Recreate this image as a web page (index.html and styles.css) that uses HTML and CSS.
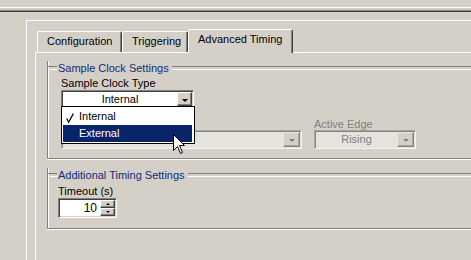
FILE: index.html
```html
<!DOCTYPE html>
<html>
<head>
<meta charset="utf-8">
<title>Advanced Timing</title>
<link rel="stylesheet" href="styles.css">
</head>
<body>
<div class="topbar"></div>
<div class="frame">
  <div class="frame-inner">
    <div class="outer">
      <div class="tabs">
        <div class="tab t1">Configuration</div>
        <div class="tab t2">Triggering</div>
        <div class="tab sel t3">Advanced Timing</div>
      </div>
      <div class="panel">
        <div class="group g1">
          <div class="ghead"><span class="gtitle">Sample Clock Settings</span></div>
          <div class="field">
            <div class="label">Sample Clock Type</div>
            <div class="combo-wrap">
              <div class="combo c-type"><span class="cval">Internal</span><span class="cbtn"><i class="arr"></i></span></div>
              <ul class="droplist">
                <li class="item"><svg class="check" width="8" height="10" viewBox="0 0 8 10"><path d="M0.8 5.6 L2.6 9.2 L7.4 0.6" fill="none" stroke="#000" stroke-width="1.2"/></svg>Internal</li>
                <li class="item hl">External</li>
              </ul>
              <svg class="cursor" width="13" height="21" viewBox="0 0 13 21"><path d="M0.5 0.5 L0.5 16.5 L4.5 12.5 L7.5 19.5 L9.5 18.5 L6.5 11.5 L11.5 11.5 Z" fill="#fff" stroke="#000" stroke-width="1" stroke-linejoin="miter"/></svg>
            </div>
          </div>
          <div class="row2">
            <div class="field f-src">
              <div class="label dis">&nbsp;</div>
              <div class="combo dis c-src"><span class="cval"></span><span class="cbtn"><i class="arr"></i></span></div>
            </div>
            <div class="field f-edge">
              <div class="label dis">Active Edge</div>
              <div class="combo dis c-edge"><span class="cval">Rising</span><span class="cbtn"><i class="arr"></i></span></div>
            </div>
          </div>
        </div>
        <div class="group g2">
          <div class="ghead"><span class="gtitle">Additional Timing Settings</span></div>
          <div class="label l-timeout">Timeout (s)</div>
          <div class="num">
            <span class="num-val">10</span>
            <span class="spin">
              <span class="sbtn"><i class="sarr up"></i></span>
              <span class="sbtn"><i class="sarr down"></i></span>
            </span>
          </div>
        </div>
      </div>
    </div>
  </div>
</div>
</body>
</html>
```

FILE: styles.css
```css
* { box-sizing: border-box; }
html, body {
  margin: 0;
  padding: 0;
}
body {
  width: 471px;
  height: 260px;
  overflow: hidden;
  background: #d4d0c8;
  font-family: "Liberation Sans", Arial, sans-serif;
  font-size: 11px;
  color: #000;
}
.topbar {
  height: 8px;
  border-bottom: 1px solid #fff;
}
.frame {
  margin-top: 2px;
  border-top: 1px solid #808080;
}
.frame-inner {
  border-top: 1px solid #404040;
  padding: 8px 0 0 26px;
}
.outer {
  border-top: 1px solid #fff;
  border-left: 1px solid #fff;
  height: 240px;
  padding: 8px 0 0 8px;
}
.tabs {
  display: flex;
  align-items: flex-end;
  height: 24px;
  margin-bottom: -1px;
  padding-left: 2px;
  position: relative;
  z-index: 1;
}
.tab {
  height: 21px;
  margin-bottom: 1px;
  border-top: 1px solid #fff;
  border-left: 1px solid #fff;
  border-right: 1px solid #404040;
  box-shadow: inset -1px 0 0 #808080;
  border-radius: 2px 2px 0 0;
  padding: 3px 0 0 9px;
  line-height: 13px;
  white-space: nowrap;
  background: #d4d0c8;
}
.t1 { width: 85px; }
.t2 { width: 66px; }
.t3 { width: 105px; }
.tab.sel {
  height: 24px;
  margin-bottom: 0;
}
.panel {
  border-top: 1px solid #fff;
  border-left: 1px solid #fff;
  padding-left: 11px;
  height: 208px;
}
.group {
  border-left: 1px solid #808080;
  border-bottom: 1px solid #808080;
  box-shadow: inset 1px 0 0 #fff, 0 1px 0 #fff;
}
.g1 {
  margin-top: 14px;
  padding: 0 0 9px 13px;
}
.g2 {
  margin-top: 15px;
  padding: 0 0 10px 10px;
}
.ghead {
  display: flex;
  align-items: center;
  height: 14px;
  margin-top: -6px;
}
.g1 .ghead { margin-left: -13px; }
.g2 .ghead { margin-left: -10px; }
.ghead::before,
.ghead::after {
  content: "";
  height: 2px;
  border-top: 1px solid #808080;
  border-bottom: 1px solid #fff;
}
.ghead::before { width: 9px; }
.ghead::after { flex: 1; }
.gtitle {
  color: #0f2d7c;
  line-height: 14px;
  padding: 0 3px 1px 1px;
  white-space: nowrap;
}
.label {
  line-height: 13px;
  white-space: nowrap;
}
.g1 > .field > .label { margin-top: 2px; }
.label.dis { color: #808080; line-height: 12px; }
.combo-wrap {
  position: relative;
  width: 133px;
}
.combo {
  display: flex;
  height: 18px;
  border: 1px solid;
  border-color: #808080 #fff #fff #808080;
  box-shadow: inset 1px 1px 0 #404040, inset -1px -1px 0 #d4d0c8;
  background: #fff;
  padding: 1px;
}
.cval {
  flex: 1;
  text-align: center;
  line-height: 14px;
  white-space: nowrap;
}
.cbtn {
  width: 15px;
  border: 1px solid;
  border-color: #fff #404040 #404040 #fff;
  box-shadow: inset -1px -1px 0 #808080;
  background: #d4d0c8;
  display: flex;
  align-items: center;
  justify-content: center;
}
.arr {
  width: 0;
  height: 0;
  border-left: 3px solid transparent;
  border-right: 3px solid transparent;
  border-top: 3px solid #000;
  margin-top: 2px;
}
.row2 {
  display: flex;
  gap: 12px;
  margin-top: 10px;
}
.combo.dis {
  height: 19px;
  background: #e5e3de;
  border-color: #a8a6a0 #f4f3f0 #f4f3f0 #a8a6a0;
  box-shadow: inset 1px 1px 0 #86837d, inset -1px -1px 0 #e5e3de;
}
.combo.dis .cval { color: #808080; line-height: 15px; }
.combo.dis .cbtn {
  width: 17px;
  border-color: #e9e7e2 #86837d #86837d #e9e7e2;
  box-shadow: inset -1px -1px 0 #a8a6a0;
  background: #d4d0c8;
}
.combo.dis .arr { border-top-color: #808080; }
.c-src { width: 241px; }
.c-edge { width: 102px; }
.droplist {
  position: absolute;
  left: 0;
  top: 16px;
  width: 134px;
  margin: 0;
  padding: 1px;
  list-style: none;
  background: #fff;
  border: 1px solid #000;
  z-index: 2;
}
.item {
  position: relative;
  height: 17px;
  line-height: 17px;
  padding-left: 16px;
  margin-right: 1px;
}
.item.hl {
  background: #0a246a;
  color: #fff;
}
.check {
  position: absolute;
  left: 3px;
  top: 5px;
}
.cursor {
  position: absolute;
  left: 112px;
  top: 44px;
  z-index: 3;
}
.l-timeout { margin-top: 3px; }
.num {
  display: flex;
  width: 59px;
  height: 20px;
  border: 1px solid;
  border-color: #808080 #fff #fff #808080;
  box-shadow: inset 1px 1px 0 #404040, inset -1px -1px 0 #d4d0c8;
  background: #fff;
  padding: 1px;
}
.num-val {
  flex: 1;
  text-align: right;
  padding-right: 3px;
  line-height: 16px;
  font-size: 12px;
}
.spin {
  display: flex;
  flex-direction: column;
  width: 15px;
}
.sbtn {
  flex: 1;
  border: 1px solid;
  border-color: #fff #404040 #404040 #fff;
  box-shadow: inset -1px -1px 0 #808080;
  background: #d4d0c8;
  display: flex;
  align-items: center;
  justify-content: center;
}
.sarr {
  width: 0;
  height: 0;
  border-left: 2px solid transparent;
  border-right: 2px solid transparent;
}
.sarr.up { border-bottom: 2px solid #000; }
.sarr.down { border-top: 2px solid #000; }
```
